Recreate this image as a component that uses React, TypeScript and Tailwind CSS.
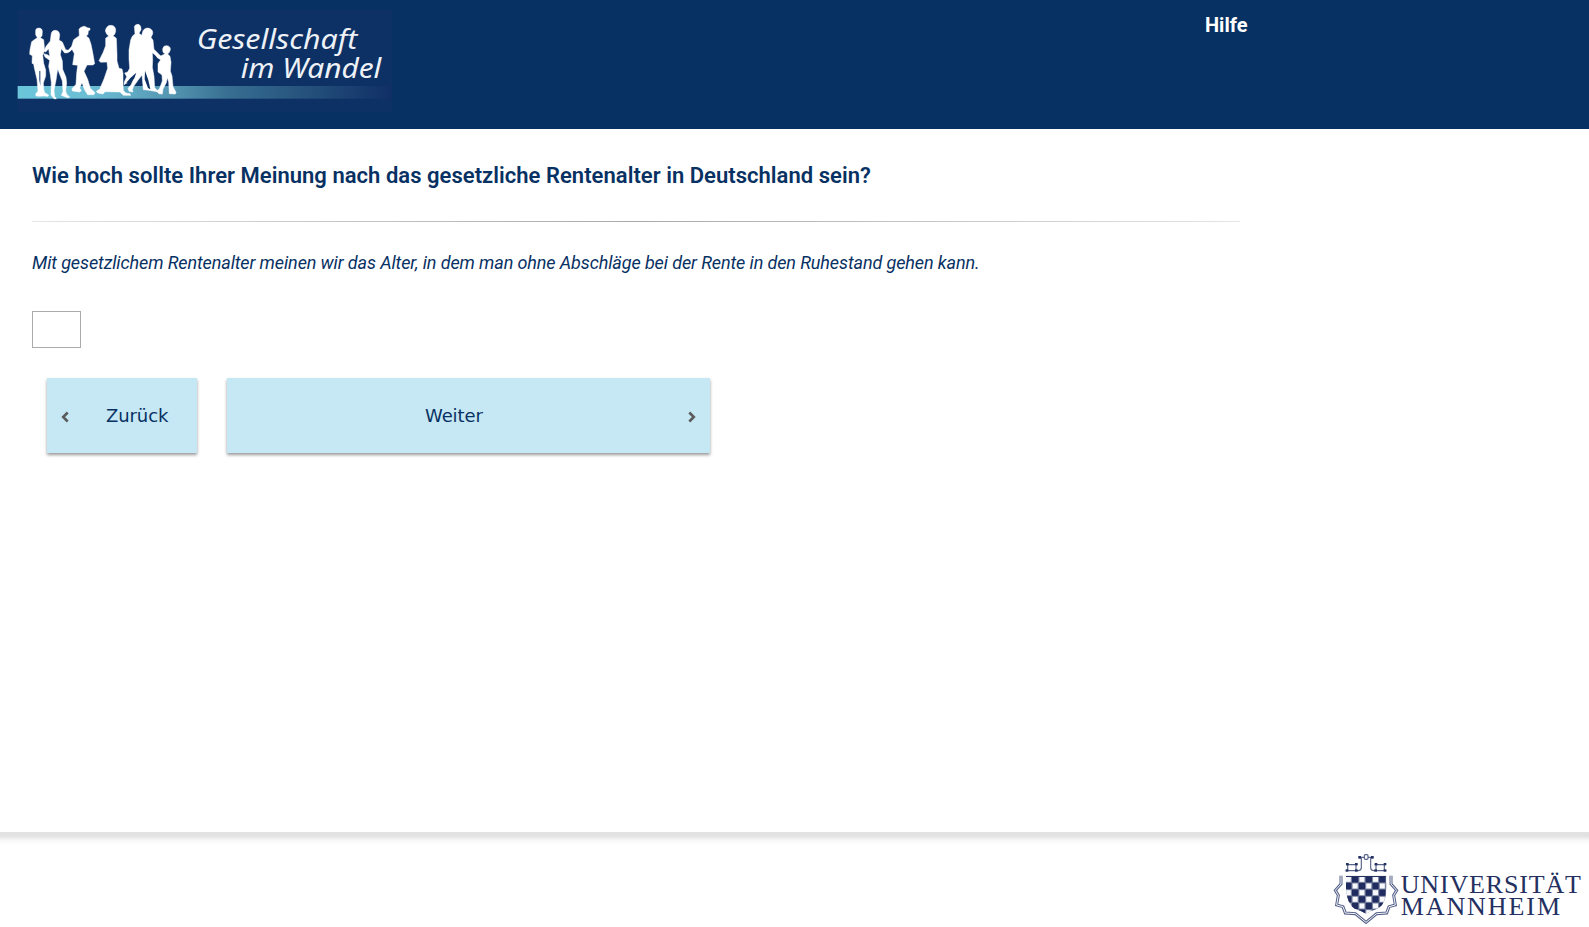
function SurveyLogo() {
  return (
    <svg className="block h-[102px] w-[375px]" viewBox="51 30 1125 306" role="img" aria-label="Gesellschaft im Wandel">
      <defs>
        <linearGradient id="band" x1="0" x2="1" y1="0" y2="0">
          <stop offset="0" stopColor="#6bc6da" />
          <stop offset="0.2" stopColor="#6bbdd3" />
          <stop offset="0.42" stopColor="#5394b0" />
          <stop offset="0.56" stopColor="#386f92" />
          <stop offset="0.78" stopColor="#24507b" />
          <stop offset="1" stopColor="#102f66" />
        </linearGradient>
      </defs>
      <rect x="51" y="30" width="1125" height="306" fill="#0d3065" />
      <rect x="53" y="258" width="1121" height="38" fill="url(#band)" />
      <g fill="#fff" stroke="#fff" strokeWidth="1.5" strokeLinejoin="round">
        <path d="M107 91 Q108 84 117 84 Q127 85 127 94 L126 107 L121 113 L131 119 L133 140 L133 153 L128 166 L131 190 L137 210 L137 228 L130 249 L131 268 L134 278 L146 285 L144 289 L129 288 L119 289 L108 288 L107 282 L114 273 L111 238 L103 204 L101 192 L96 190 L97 167 L89 163 L90 149 L95 125 L103 119 L112 113 L107 104 Z" />
        <path d="M153 106 Q154 91 166 91 Q179 92 179 106 L177 120 L187 126 L197 149 L205 151 L215 146 L213 151 L204 158 L194 159 L184 146 L181 164 L187 183 L188 208 L198 232 L200 248 L197 273 L200 283 L209 291 L203 293 L184 286 L189 275 L187 243 L173 207 L168 241 L162 270 L164 289 L169 297 L162 296 L153 285 L154 248 L151 224 L146 199 L149 181 L135 171 L131 161 L142 164 L149 169 L146 146 L137 156 L131 153 L139 138 L151 123 Z" />
        <path fill="#0d3065" stroke="none" d="M118 213 L121 213 L121 258 L118 239 Z" />
        <path d="M237 88 L241 83 Q253 74 262 83 L270 85 L270 90 L265 92 L264 103 L259 108 L267 115 L273 133 L278 157 L284 191 L279 195 L261 195 L252 214 L263 238 L271 265 L285 278 L282 284 L263 284 L253 268 L246 248 L239 264 L244 272 L239 276 L217 273 L216 266 L228 253 L230 220 L233 196 L218 194 L223 161 L216 148 L207 156 L205 151 L215 139 L221 119 L238 107 Z" />
        <path d="M316 93 Q319 76 333 76 Q348 77 347 94 L344 103 L339 107 L349 115 L350 137 L351 165 L351 183 L357 205 L366 207 L369 220 L369 250 L370 271 L377 279 L390 281 L392 286 L370 286 L360 276 L315 275 L309 282 L293 279 L289 274 L300 267 L302 260 L312 237 L323 205 L321 186 L302 187 L297 182 L309 158 L317 137 L317 115 L326 108 L320 102 Z" />
        <path d="M403 79 Q407 72 416 73 Q424 77 423 89 L417 100 L425 106 L429 92 Q435 82 448 85 Q460 90 458 102 L453 112 L459 121 L461 140 L462 148 L487 173 L495 176 L490 181 L479 176 L457 158 L458 181 L457 202 L462 229 L464 263 L470 269 L471 275 L447 271 L430 269 L426 225 L414 241 L401 259 L397 269 L399 276 L387 274 L384 265 L393 255 L401 237 L372 254 L373 246 L380 230 L374 219 L383 216 L389 205 L387 177 L387 150 L392 120 L397 109 L405 101 Z" />
        <path fill="#0d3065" stroke="none" d="M435 212 L445 240 L451 268 L444 264 L434 238 Z M391 234 L409 218 L403 235 L391 249 L379 248 Z" />
        <path d="M488 147 Q490 136 500 137 Q512 138 511 149 L508 157 L503 162 L510 169 L513 187 L511 213 L516 228 L519 260 L528 277 L526 282 L508 281 L506 246 L502 233 L499 248 L489 267 L487 282 L477 281 L469 273 L478 267 L487 243 L486 225 L474 216 L474 191 L482 179 L472 173 L466 163 L480 169 L490 164 L495 161 L489 157 Z" />
      </g>
      <g fill="#eef2f6" fontFamily="'Noto Sans', sans-serif" fontStyle="italic" fontSize="79">
        <text x="590" y="148" textLength="482" lengthAdjust="spacingAndGlyphs">Gesellschaft</text>
        <text x="722" y="233" textLength="422" lengthAdjust="spacingAndGlyphs">im Wandel</text>
      </g>
    </svg>
  );
}

const crestOutline =
  "M48 92 V117 L31 136 L40 151 L35 180 L54 185 L61 204 L91 206 L123 232 L155 206 L185 204 L192 185 L211 180 L206 151 L215 136 L198 117 V92";

function UniversityLogo() {
  return (
    <svg className="block h-[82px] w-[264px]" viewBox="0 0 792 246" role="img" aria-label="Universität Mannheim">
      <defs>
        <clipPath id="shield">
          <path d="M63 92 H184 V130 Q184 178 157 191 Q137 197 123 206 Q109 197 89 191 Q66 178 63 130 Z" />
        </clipPath>
      </defs>
      <path fill="none" stroke="#56628a" strokeWidth="9" d={crestOutline} />
      <path fill="none" stroke="#f4f5f8" strokeWidth="3" d={crestOutline} />
      <g fill="none" stroke="#59658a" strokeWidth="3.5">
        <path d="M62 77 H99 Q109 76 109 68 V38 M184 77 H147 Q137 76 137 68 V38 M68 58 V76 M93 58 V76 M64 59 H97 M153 58 V76 M178 58 V76 M149 59 H182 M101 37 H117 M129 37 H145" />
        <rect x="118" y="29" width="11" height="14" rx="3" />
      </g>
      <g fill="#24305f">
        <rect x="63" y="54" width="8" height="7" /><rect x="90" y="54" width="8" height="7" />
        <rect x="149" y="54" width="8" height="7" /><rect x="176" y="54" width="8" height="7" />
        <rect x="100" y="33" width="8" height="8" /><rect x="138" y="33" width="8" height="8" />
        <rect x="62" y="73" width="8" height="7" /><rect x="90" y="73" width="8" height="7" />
        <rect x="148" y="73" width="8" height="7" /><rect x="176" y="73" width="8" height="7" />
      </g>
      <g clipPath="url(#shield)">
        <rect x="60" y="90" width="130" height="125" fill="#7c86a3" />
        {Array.from({ length: 42 }, (_, i) => {
          const row = Math.floor(i / 7);
          const col = i % 7;
          const dark = (row + col) % 2 === 1;
          const size = dark ? 19 : 15;
          const inset = dark ? 0.5 : 2.5;
          return (
            <rect
              key={i}
              x={60 + col * 20.4 + inset}
              y={93 + row * 20 + inset}
              width={size}
              height={size}
              fill={dark ? "#202c60" : "#f7f8fb"}
            />
          );
        })}
        <path d="M63 94 H184" stroke="#24305f" strokeWidth="4" />
      </g>
      <g fill="#24305f" fontFamily="'Liberation Serif', serif" fontSize="78">
        <text x="227" y="144" textLength="541" lengthAdjust="spacing">UNIVERSITÄT</text>
        <text x="227" y="209" textLength="478" lengthAdjust="spacing">MANNHEIM</text>
      </g>
    </svg>
  );
}

function Chevron({ left = false }: { left?: boolean }) {
  return (
    <svg className="mt-[3px] h-3 w-2 shrink-0" viewBox="0 0 8 12" fill="none" stroke="#5b5b5b" strokeWidth="2.6">
      <path d={left ? "M6.7 1.5 2.2 6l4.5 4.5" : "M1.3 1.5 5.8 6l-4.5 4.5"} />
    </svg>
  );
}

export default function App() {
  return (
    <div className="flex h-[927px] w-full flex-col overflow-hidden bg-white font-['Roboto',sans-serif] text-[#083163]">
      <header className="flex h-[129px] shrink-0 items-start bg-[#083163] pt-[10px] pl-[17px]">
        <SurveyLogo />
        <a href="#" className="ml-[813px] text-[20px] leading-[30px] font-bold text-white">Hilfe</a>
      </header>
      <main className="flex w-[1240px] flex-1 flex-col items-start pt-8 pl-8">
        <h1 className="text-[22px] leading-[30px] font-semibold tracking-[0.035px] whitespace-nowrap">
          Wie hoch sollte Ihrer Meinung nach das gesetzliche Rentenalter in Deutschland sein?
        </h1>
        <div className="mt-[30px] h-px w-full bg-linear-to-r from-[#e5e5e5] via-[#a9a9a9] to-[#e5e5e5]" />
        <p className="mt-[27px] text-[18px] leading-[28px] tracking-[-0.112px] whitespace-nowrap italic">
          Mit gesetzlichem Rentenalter meinen wir das Alter, in dem man ohne Abschläge bei der Rente in den Ruhestand gehen kann.
        </p>
        <input aria-label="Rentenalter" className="mt-[34px] h-[37px] w-[49px] border border-[#ababab] bg-white px-2 text-[18px]" />
        <div className="mt-[30px] ml-[15px] flex gap-[30px] font-['DejaVu_Sans',sans-serif] text-[18px] tracking-[-0.1px]">
          <button className="flex h-[75px] w-[150px] items-center bg-[#c5e8f4] pl-[14px] shadow-[0_2px_3px_rgba(0,0,0,0.4)]">
            <Chevron left />
            <span className="ml-[37px]">Zurück</span>
          </button>
          <button className="flex h-[75px] w-[483px] items-center justify-between bg-[#c5e8f4] pr-[14px] pl-[198px] shadow-[0_2px_3px_rgba(0,0,0,0.4)]">
            <span>Weiter</span>
            <Chevron />
          </button>
        </div>
      </main>
      <footer className="flex h-[95px] shrink-0 flex-col">
        <div className="h-[4px] bg-[#e2e2e2]" />
        <div className="h-[9px] bg-linear-to-b from-[#e2e2e2] via-[#f8f8f8] to-white" />
        <div className="flex justify-end">
          <UniversityLogo />
        </div>
      </footer>
    </div>
  );
}
